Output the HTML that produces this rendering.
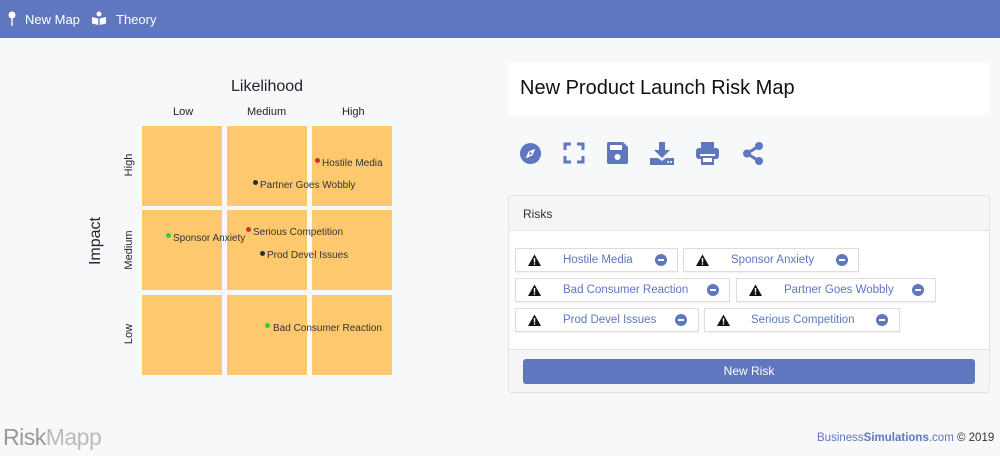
<!DOCTYPE html>
<html><head><meta charset="utf-8"><style>
*{margin:0;padding:0;box-sizing:border-box}
body{width:1000px;height:456px;background:#f7f8fa;font-family:"Liberation Sans",sans-serif;position:relative;overflow:hidden;color:#212529}
.a{position:absolute;white-space:nowrap}
.nav{left:0;top:0;width:1000px;height:38px;background:#5f77bf;color:#fff;font-size:13px}
.cell{position:absolute;width:80px;height:80px;background:#fec86f}
.lab{position:absolute;font-size:10px;color:#333;white-space:nowrap;line-height:12px}
.dot{position:absolute;width:5px;height:5px;border-radius:50%}
.chip{position:absolute;height:24px;background:#fff;border:1px solid #ddd;box-shadow:0 1px 1px rgba(0,0,0,.06);font-size:11.5px;color:#5f77bf;line-height:22px;white-space:nowrap}
.chip svg{position:absolute;left:12px;top:5px}
.chip .t{position:absolute;top:0}
.chip .m{position:absolute;top:5px;width:12px;height:12px;border-radius:50%;background:#5f77bf}
.chip .m:after{content:"";position:absolute;left:3px;top:5px;width:6px;height:2px;background:#fff}
.ic{position:absolute;top:142px}
</style></head><body>
<svg width="0" height="0" style="position:absolute"><defs><g id="w"><path d="M6.5 0.5L13 12H0z" fill="#111"/><rect x="5.8" y="4" width="1.4" height="4.5" fill="#fff"/><rect x="5.8" y="9.3" width="1.4" height="1.4" fill="#fff"/></g></defs></svg>
<div class="a nav">
<svg class="a" style="left:8px;top:11px" width="8" height="16" viewBox="0 0 8 16"><circle cx="4" cy="4" r="3.5" fill="#fff"/><rect x="3.3" y="6" width="1.4" height="9" fill="#fff"/></svg>
<span class="a" style="left:25px;top:12px">New Map</span>
<svg class="a" style="left:92px;top:11px" width="14" height="14" viewBox="0 0 14 14"><circle cx="7" cy="3" r="2.5" fill="#fff"/><path d="M0 6l6.3 1.5V14L0 12.5z M14 6l-6.3 1.5V14L14 12.5z" fill="#fff"/></svg>
<span class="a" style="left:116px;top:12px">Theory</span>
</div>

<div class="a" style="left:231px;top:78px;font-size:16px">Likelihood</div>
<div class="a" style="left:173px;top:106px;font-size:11px">Low</div>
<div class="a" style="left:247px;top:106px;font-size:11px">Medium</div>
<div class="a" style="left:342px;top:106px;font-size:11px">High</div>
<div class="a" style="left:71px;top:232px;font-size:16px;transform:rotate(-90deg);transform-origin:center;width:50px;text-align:center">Impact</div>
<div class="a" style="left:109px;top:159px;font-size:11px;transform:rotate(-90deg);width:40px;text-align:center">High</div>
<div class="a" style="left:109px;top:244px;font-size:11px;transform:rotate(-90deg);width:40px;text-align:center">Medium</div>
<div class="a" style="left:109px;top:328px;font-size:11px;transform:rotate(-90deg);width:40px;text-align:center">Low</div>

<div class="cell" style="left:142px;top:126px"></div><div class="cell" style="left:227px;top:126px"></div><div class="cell" style="left:312px;top:126px"></div>
<div class="cell" style="left:142px;top:210px"></div><div class="cell" style="left:227px;top:210px"></div><div class="cell" style="left:312px;top:210px"></div>
<div class="cell" style="left:142px;top:295px"></div><div class="cell" style="left:227px;top:295px"></div><div class="cell" style="left:312px;top:295px"></div>

<div class="dot" style="left:315px;top:158px;background:#d32f2f"></div><div class="lab" style="left:322px;top:158px">Hostile Media</div>
<div class="dot" style="left:253px;top:180px;background:#263238"></div><div class="lab" style="left:260px;top:180px">Partner Goes Wobbly</div>
<div class="dot" style="left:166px;top:233px;background:#2ecc40"></div><div class="lab" style="left:173px;top:233px">Sponsor Anxiety</div>
<div class="dot" style="left:246px;top:227px;background:#d32f2f"></div><div class="lab" style="left:253px;top:227px">Serious Competition</div>
<div class="dot" style="left:260px;top:251px;background:#263238"></div><div class="lab" style="left:267px;top:250px">Prod Devel Issues</div>
<div class="dot" style="left:265px;top:323px;background:#2ecc40"></div><div class="lab" style="left:273px;top:323px">Bad Consumer Reaction</div>

<div class="a" style="left:508px;top:62px;width:482px;height:53px;background:#fff"></div>
<div class="a" style="left:520px;top:77px;font-size:20px;color:#111">New Product Launch Risk Map</div>

<svg class="ic" style="left:519px" width="23" height="23" viewBox="0 0 24 24"><circle cx="12" cy="12" r="11" fill="#5f77bf"/><path d="M17 7l-3 7-7 3 3-7z" fill="#fff"/><circle cx="12" cy="12" r="1.3" fill="#5f77bf"/></svg>
<svg class="ic" style="left:563px" width="22" height="22" viewBox="0 0 22 22" fill="none" stroke="#5f77bf" stroke-width="3"><path d="M2 8V2h6M14 2h6v6M20 14v6h-6M8 20H2v-6"/></svg>
<svg class="ic" style="left:607px" width="21" height="22" viewBox="0 0 21 22"><path d="M0 2a2 2 0 012-2h14l5 5v15a2 2 0 01-2 2H2a2 2 0 01-2-2z" fill="#5f77bf"/><rect x="3" y="3" width="12" height="5" fill="#fff"/><circle cx="10.5" cy="15" r="3" fill="#fff"/></svg>
<svg class="ic" style="left:650px" width="24" height="23" viewBox="0 0 24 23"><path d="M9 0h6v8h5l-8 8-8-8h5z" fill="#5f77bf"/><path d="M0 16h8l4 3 4-3h8v7H0z" fill="#5f77bf"/><circle cx="18" cy="20" r="1" fill="#fff"/><circle cx="21" cy="20" r="1" fill="#fff"/></svg>
<svg class="ic" style="left:696px" width="23" height="23" viewBox="0 0 23 23"><rect x="5" y="0" width="13" height="7" fill="#5f77bf"/><rect x="0" y="6" width="23" height="11" rx="3" fill="#5f77bf"/><rect x="4" y="12" width="15" height="2" fill="#fff"/><rect x="5" y="15" width="13" height="8" fill="#5f77bf"/><rect x="7" y="16" width="9" height="4" fill="#fff"/></svg>
<svg class="ic" style="left:742px" width="22" height="23" viewBox="0 0 22 23"><path d="M17 4L5 11.5 17 19" stroke="#5f77bf" stroke-width="3" fill="none"/><circle cx="17" cy="4" r="4" fill="#5f77bf"/><circle cx="5" cy="11.5" r="4" fill="#5f77bf"/><circle cx="17" cy="19" r="4" fill="#5f77bf"/></svg>

<div class="a" style="left:508px;top:195px;width:482px;height:198px;background:#fff;border:1px solid #e3e3e3;border-radius:3px;overflow:hidden">
<div class="a" style="left:0;top:0;width:482px;height:35px;background:#f5f5f5;border-bottom:1px solid #e3e3e3"></div>
<div class="a" style="left:14px;top:11px;font-size:12px;color:#333">Risks</div>
<div class="a" style="left:0;top:153px;width:482px;height:45px;background:#f5f5f5;border-top:1px solid #e3e3e3"></div>
<div class="a" style="left:14px;top:163px;width:452px;height:25px;background:#5f77bf;border-radius:3px;color:#fff;font-size:12px;text-align:center;line-height:25px">New Risk</div>
</div>

<div class="chip" style="left:515px;top:248px;width:163px"><svg width="13" height="12"><use href="#w"/></svg><span class="t" style="left:47px">Hostile Media</span><span class="m" style="left:139px"></span></div>
<div class="chip" style="left:683px;top:248px;width:176px"><svg width="13" height="12"><use href="#w"/></svg><span class="t" style="left:47px">Sponsor Anxiety</span><span class="m" style="left:152px"></span></div>
<div class="chip" style="left:515px;top:278px;width:215px"><svg width="13" height="12"><use href="#w"/></svg><span class="t" style="left:47px">Bad Consumer Reaction</span><span class="m" style="left:191px"></span></div>
<div class="chip" style="left:736px;top:278px;width:200px"><svg width="13" height="12"><use href="#w"/></svg><span class="t" style="left:47px">Partner Goes Wobbly</span><span class="m" style="left:175px"></span></div>
<div class="chip" style="left:515px;top:308px;width:184px"><svg width="13" height="12"><use href="#w"/></svg><span class="t" style="left:47px">Prod Devel Issues</span><span class="m" style="left:159px"></span></div>
<div class="chip" style="left:704px;top:308px;width:196px"><svg width="13" height="12"><use href="#w"/></svg><span class="t" style="left:46px">Serious Competition</span><span class="m" style="left:171px"></span></div>

<div class="a" style="left:3px;top:424px;font-size:23px;color:#999;letter-spacing:-0.5px">Risk<span style="color:#bbb">Mapp</span></div>
<div class="a" style="left:817px;top:432px;font-size:11.5px;color:#5f77bf">Business<b>Simulations</b>.com <span style="color:#333">© 2019</span></div>
</body></html>
